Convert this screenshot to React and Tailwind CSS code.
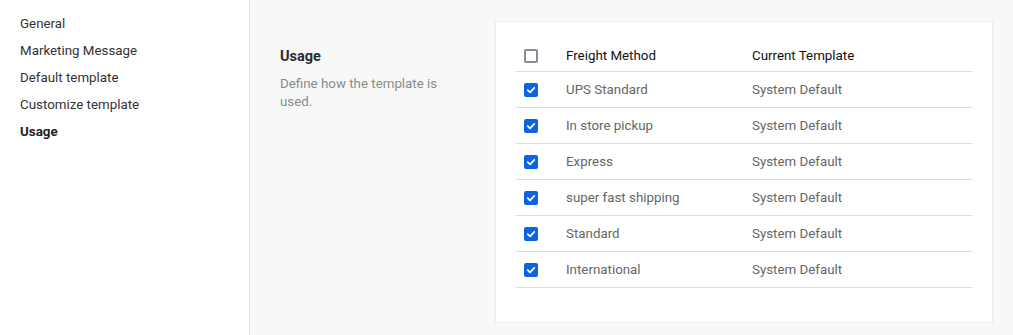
import React from "react";

const rows = ["UPS Standard", "In store pickup", "Express", "super fast shipping", "Standard", "International"];

function Check({ checked }) {
  if (checked) {
    return (
      <div className="w-[14px] h-[14px] rounded-[2px] bg-[#0b63e5] flex items-center justify-center">
        <svg width="10" height="10" viewBox="0 0 10 10">
          <path d="M1.8 5.2 L4 7.3 L8.3 2.8" fill="none" stroke="white" strokeWidth="1.8" strokeLinecap="round" strokeLinejoin="round" />
        </svg>
      </div>
    );
  }
  return <div className="w-[14px] h-[14px] rounded-[2px] border-2 border-[#8c8c96] bg-white" />;
}

export default function App() {
  const nav = ["General", "Marketing Message", "Default template", "Customize template", "Usage"];
  return (
    <div className="flex w-[1013px] h-[335px] bg-[#f8f8f8] text-[13.33px]" style={{ fontFamily: "Roboto, 'Liberation Sans', sans-serif" }}>
      <div className="w-[250px] shrink-0 bg-white border-r border-[#e6e6e6] pt-[15px] pl-[20px]">
        {nav.map((n, i) => (
          <div key={n} className={`h-[27px] leading-[18px] ${i === 4 ? "font-bold text-[#222]" : "text-[#333]"}`}>{n}</div>
        ))}
      </div>
      <div className="flex flex-1 pt-[21px]">
        <div className="w-[245px] pl-[30px] pt-[26px] shrink-0">
          <div className="text-[14.5px] font-bold text-[#2b2b33] leading-[20px]">Usage</div>
          <div className="mt-[8px] text-[#8a8a8a] leading-[18px] w-[175px]">Define how the template is used.</div>
        </div>
        <div className="w-[498px] h-[302px] bg-white border border-[#ececec] px-[20px] pt-[18px]">
          <div className="flex h-[32px] pt-[1px] items-center border-b border-[#dcdcdc] text-[#111]">
            <div className="w-[50px] pl-[8px]"><Check checked={false} /></div>
            <div className="w-[186px]">Freight Method</div>
            <div>Current Template</div>
          </div>
          {rows.map((r) => (
            <div key={r} className="flex h-[36px] pt-[1px] items-center border-b border-[#dcdcdc] text-[#666]">
              <div className="w-[50px] pl-[8px]"><Check checked /></div>
              <div className="w-[186px]">{r}</div>
              <div>System Default</div>
            </div>
          ))}
        </div>
      </div>
    </div>
  );
}
